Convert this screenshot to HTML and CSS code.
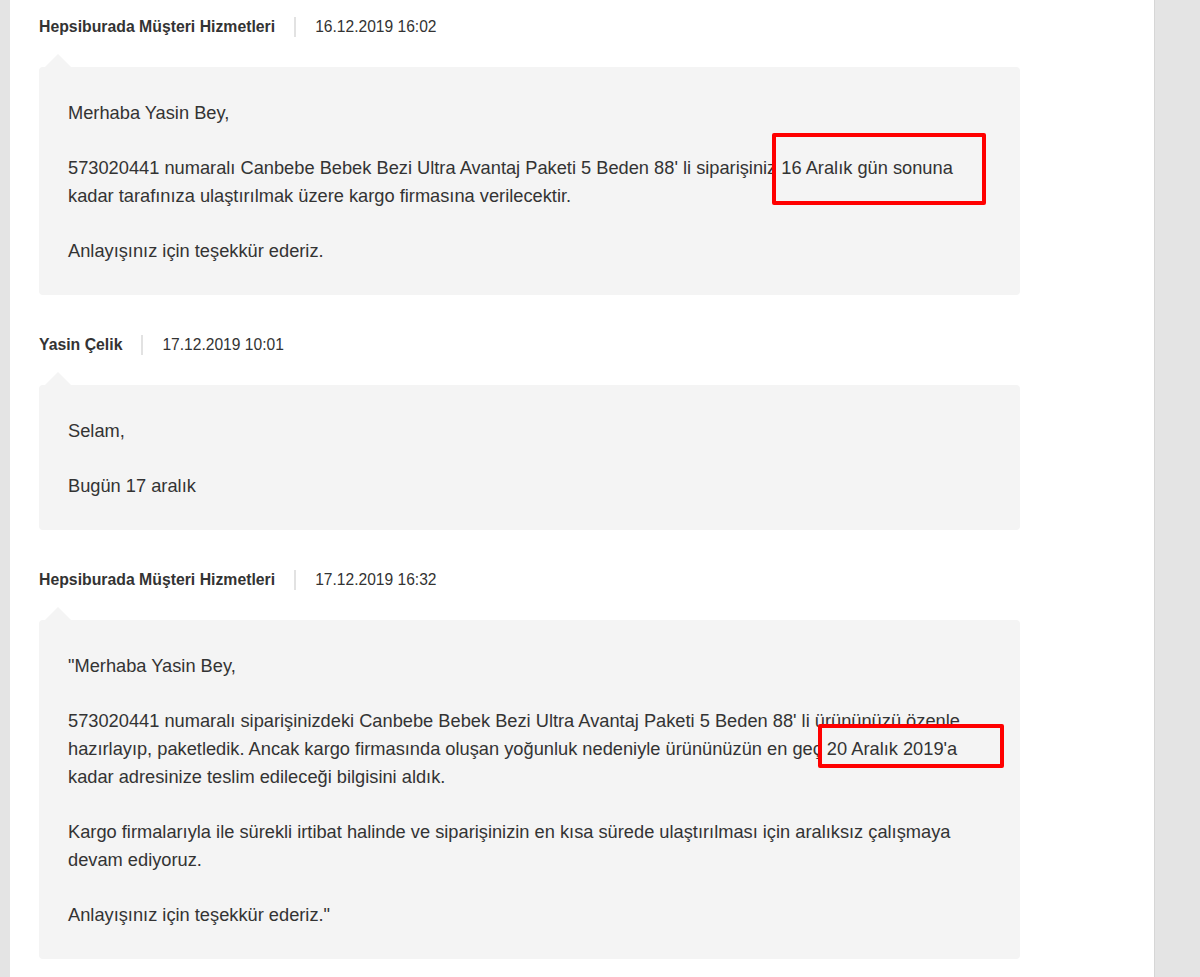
FILE: index.html
```html
<!DOCTYPE html>
<html lang="tr">
<head>
    <meta charset="utf-8" />
    <meta name="viewport" content="width=device-width, initial-scale=1.0" />
    <link rel="stylesheet" href="styles.css">
    <title>Soru Detayı</title>
</head>
<body>
    <div class="page">

        <div class="message">
            <div class="meta">
                <span class="author">Hepsiburada Müşteri Hizmetleri</span>
                <span class="sep"></span>
                <span class="date">16.12.2019 16:02</span>
            </div>
            <div class="bubble">
                <p>Merhaba Yasin Bey,</p>
                <p>573020441 numaralı Canbebe Bebek Bezi Ultra Avantaj Paketi 5 Beden 88' li siparişiniz 16 Aralık gün sonuna kadar tarafınıza ulaştırılmak üzere kargo firmasına verilecektir.</p>
                <p>Anlayışınız için teşekkür ederiz.</p>
                <span class="mark mark-one"></span>
            </div>
        </div>

        <div class="message">
            <div class="meta">
                <span class="author">Yasin Çelik</span>
                <span class="sep"></span>
                <span class="date">17.12.2019 10:01</span>
            </div>
            <div class="bubble">
                <p>Selam,</p>
                <p>Bugün 17 aralık</p>
            </div>
        </div>

        <div class="message">
            <div class="meta">
                <span class="author">Hepsiburada Müşteri Hizmetleri</span>
                <span class="sep"></span>
                <span class="date">17.12.2019 16:32</span>
            </div>
            <div class="bubble">
                <p>"Merhaba Yasin Bey,</p>
                <p>573020441 numaralı siparişinizdeki Canbebe Bebek Bezi Ultra Avantaj Paketi 5 Beden 88' li ürününüzü özenle hazırlayıp, paketledik. Ancak kargo firmasında oluşan yoğunluk nedeniyle ürününüzün en geç 20 Aralık 2019'a kadar adresinize teslim edileceği bilgisini aldık.</p>
                <p>Kargo firmalarıyla ile sürekli irtibat halinde ve siparişinizin en kısa sürede ulaştırılması için aralıksız çalışmaya devam ediyoruz.</p>
                <p>Anlayışınız için teşekkür ederiz."</p>
                <span class="mark mark-two"></span>
            </div>
        </div>

    </div>
</body>
</html>
```

FILE: styles.css
```css
body {
    margin: 0;
    background-color: #e4e4e4;
    font-family: 'Liberation Sans', Arial, Helvetica, sans-serif;
    color: #333333;
}

.page {
    margin-left: 10px;
    width: 1145px;
    min-height: 977px;
    box-sizing: border-box;
    background-color: #ffffff;
    border-right: 1px solid #d6d6d6;
    padding: 17px 134px 19px 29px;
}

.message {
    margin-bottom: 40px;
}

.message:last-child {
    margin-bottom: 0;
}

.meta {
    display: flex;
    align-items: center;
    height: 20px;
    font-size: 15.6px;
}

.author {
    font-weight: bold;
    font-size: 15.8px;
}

.sep {
    width: 2px;
    height: 20px;
    background-color: #e2e2e2;
    margin: 0 19px 0 19px;
}

.bubble {
    position: relative;
    margin-top: 30px;
    background-color: #f4f4f4;
    border-radius: 4px;
    padding: 32px 29px 3px 29px;
    font-size: 18.25px;
    line-height: 28px;
}

/* little arrow pointing up at the author */
.bubble::before {
    content: "";
    position: absolute;
    top: -13px;
    left: 6px;
    border-left: 13px solid transparent;
    border-right: 13px solid transparent;
    border-bottom: 13px solid #f4f4f4;
}

.bubble p {
    margin: 0 0 27px 0;
}

.mark {
    position: absolute;
    border: 4px solid #ff0000;
    border-radius: 2px;
    box-sizing: border-box;
}

.mark-one {
    left: 733px;
    top: 66px;
    width: 214px;
    height: 72px;
}

.mark-two {
    left: 779px;
    top: 104px;
    width: 186px;
    height: 44px;
}
```
